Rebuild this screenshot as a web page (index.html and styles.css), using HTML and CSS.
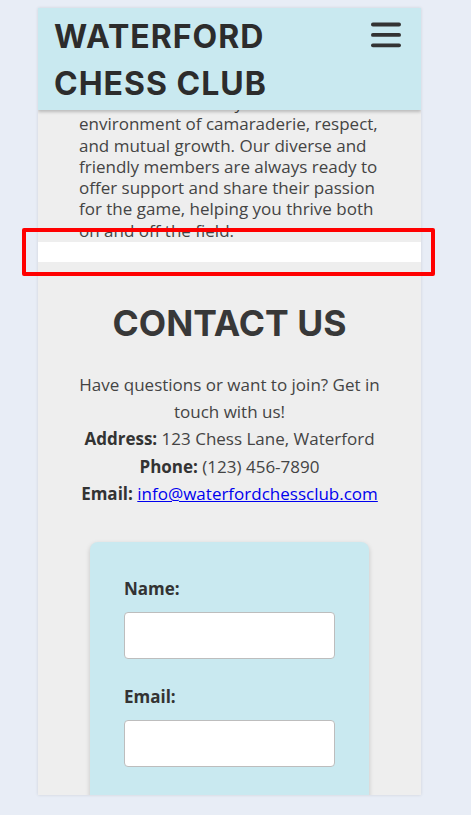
FILE: index.html
```html
<!DOCTYPE html>
<html lang="en">
<head>
<meta charset="utf-8">
<title>Waterford Chess Club</title>
<link rel="stylesheet" href="styles.css">
</head>
<body>
<div class="page">
  <header class="site-header">
    <h1 class="site-title">WATERFORD<br>CHESS CLUB</h1>
    <button class="menu-btn" aria-label="Menu">
      <svg width="30" height="26" viewBox="0 0 30 26">
        <rect x="0" y="0.6" width="30" height="3.8" rx="1.9" fill="#333"/>
        <rect x="0" y="11" width="30" height="3.8" rx="1.9" fill="#333"/>
        <rect x="0" y="21.4" width="30" height="3.8" rx="1.9" fill="#333"/>
      </svg>
    </button>
  </header>

  <section class="about">
    <p>a vibrant community with an environment of camaraderie, respect, and mutual growth. Our diverse and friendly members are always ready to offer support and share their passion for the game, helping you thrive both on and off the field.</p>
  </section>

  <div class="spacer"></div>

  <section class="contact">
    <h2 class="contact-title">CONTACT US</h2>
    <p class="contact-info">Have questions or want to join? Get in touch with us!<br>
      <strong>Address:</strong> 123 Chess Lane, Waterford<br>
      <strong>Phone:</strong> (123) 456-7890<br>
      <strong>Email:</strong> <a href="#">info@waterfordchessclub.com</a></p>

    <form class="contact-form">
      <div class="form-group">
        <label for="name">Name:</label>
        <input id="name" type="text">
      </div>
      <div class="form-group">
        <label for="email">Email:</label>
        <input id="email" type="email">
      </div>
      <div class="form-group">
        <label for="msg">Message:</label>
        <textarea id="msg"></textarea>
      </div>
    </form>
  </section>
</div>
<div class="highlight"></div>
</body>
</html>
```

FILE: styles.css
```css
html, body {
  margin: 0;
  padding: 0;
  background: #e8edf6;
  height: 815px;
  overflow: hidden;
}

body {
  position: relative;
  font-family: "Open Sans", "Liberation Sans", sans-serif;
  font-size: 17px;
  color: #444;
}

.page {
  position: relative;
  margin: 8px 0 0 38px;
  width: 383px;
  height: 787px;
  overflow: hidden;
  background: #eeeeee;
  box-shadow: 0 0 3px rgba(0, 0, 0, 0.12);
}

.site-header {
  position: absolute;
  top: 0;
  left: 0;
  right: 0;
  z-index: 5;
  height: 102px;
  box-sizing: border-box;
  padding: 5px 20px 0 16px;
  display: flex;
  justify-content: space-between;
  align-items: flex-start;
  background: #c9e9f0;
  box-shadow: 0 2px 3px rgba(0, 0, 0, 0.22);
}

.site-title {
  margin: 0;
  font-family: Inter, "DejaVu Sans", sans-serif;
  font-weight: 700;
  font-size: 32px;
  line-height: 47px;
  letter-spacing: 1px;
  color: #2c2c2c;
}

.menu-btn {
  margin: 9px 0 0 0;
  padding: 0;
  border: 0;
  background: none;
  line-height: 0;
}

.about {
  height: 234px;
  box-sizing: border-box;
  padding: 84px 41px 0;
  overflow: hidden;
}

.about p {
  margin: 0;
  line-height: 21.25px;
}

.spacer {
  height: 20px;
  background: #ffffff;
}

.contact {
  padding: 40px 41px 0;
  text-align: center;
}

.contact-title {
  margin: 0 0 26px;
  font-family: Inter, "DejaVu Sans", sans-serif;
  font-weight: 700;
  font-size: 35.5px;
  line-height: 43px;
  letter-spacing: 0;
  color: #383838;
}

.contact-info {
  margin: 0 0 35px;
  line-height: 27.2px;
}

.contact-info strong {
  color: #333;
}

.contact-info a {
  color: #0000ee;
}

.contact-form {
  width: 279px;
  box-sizing: border-box;
  margin: 0 auto;
  padding: 35px 34px 30px;
  text-align: left;
  background: #c9e9f0;
  border-radius: 8px;
  box-shadow: 0 2px 5px rgba(0, 0, 0, 0.18);
}

.form-group {
  margin-bottom: 26px;
}

.form-group label {
  display: block;
  margin-bottom: 12px;
  font-weight: 700;
  color: #333;
}

.form-group input,
.form-group textarea {
  display: block;
  width: 100%;
  height: 47px;
  box-sizing: border-box;
  margin: 0;
  border: 1px solid #bdbdbd;
  border-radius: 4px;
  background: #fff;
  font: inherit;
}

.form-group textarea {
  height: 110px;
}

.highlight {
  position: absolute;
  left: 22px;
  top: 228px;
  width: 413px;
  height: 48px;
  box-sizing: border-box;
  border: 4px solid #ff0000;
  border-radius: 2px;
  z-index: 10;
}
```
